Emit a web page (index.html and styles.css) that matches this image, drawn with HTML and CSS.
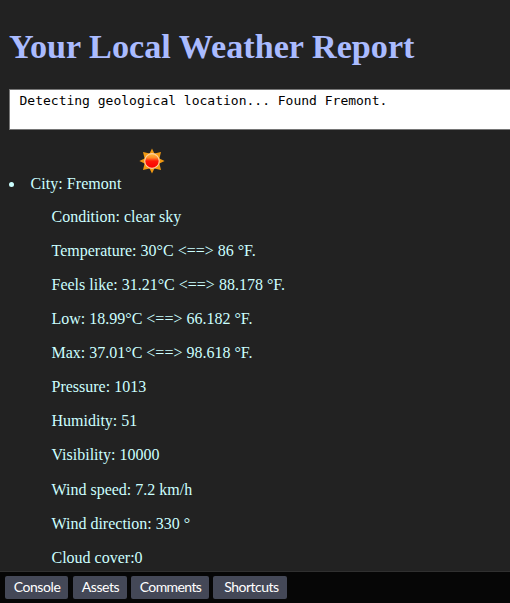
FILE: index.html
```
<!DOCTYPE html>
<html lang="en">
<head>
<meta charset="utf-8">
<title>Your Local Weather Report</title>
<link rel="stylesheet" href="styles.css">
</head>
<body>
<main class="page">
  <h1 class="title"><span>Your Local Weather Report</span></h1>
  <div class="status"><span>Detecting geological location... Found Fremont.</span></div>
  <svg class="sun" viewBox="0 0 26 26">
    <defs>
      <linearGradient id="core" x1="0" y1="0" x2="0" y2="1">
        <stop offset="0" stop-color="#ffc23c"/>
        <stop offset=".28" stop-color="#ff8a28"/>
        <stop offset=".5" stop-color="#ff1a08"/>
        <stop offset="1" stop-color="#fa0000"/>
      </linearGradient>
    </defs>
    <path fill="#f29a12" d="M13 .4 15.4 5.6 22 4 20.4 10.6 25.6 13 20.4 15.4 22 22 15.4 20.4 13 25.6 10.6 20.4 4 22 5.6 15.4 .4 13 5.6 10.6 4 4 10.6 5.6Z"/>
    <circle cx="13" cy="13" r="7.3" fill="url(#core)" stroke="#ffcf9c" stroke-width="1.2"/>
  </svg>
  <div class="city"><i class="bullet"></i><span>City: Fremont</span></div>
  <div class="details">
    <p><span>Condition: clear sky</span></p>
    <p><span>Temperature: 30°C &lt;==&gt; 86 °F.</span></p>
    <p><span>Feels like: 31.21°C &lt;==&gt; 88.178 °F.</span></p>
    <p><span>Low: 18.99°C &lt;==&gt; 66.182 °F.</span></p>
    <p><span>Max: 37.01°C &lt;==&gt; 98.618 °F.</span></p>
    <p><span>Pressure: 1013</span></p>
    <p><span>Humidity: 51</span></p>
    <p><span>Visibility: 10000</span></p>
    <p><span>Wind speed: 7.2 km/h</span></p>
    <p><span>Wind direction: 330 °</span></p>
    <p><span>Cloud cover:0</span></p>
  </div>
</main>
<footer class="toolbar">
  <button class="console">Console</button>
  <button class="assets">Assets</button>
  <button class="comments">Comments</button>
  <button class="shortcuts">Shortcuts</button>
</footer>
</body>
</html>
```
FILE: styles.css
```
* { box-sizing: border-box; }
body {
  margin: 0;
  height: 603px;
  display: flex;
  flex-direction: column;
  overflow: hidden;
  background: #222;
  color: #cff;
  font: 16px/18px "Liberation Serif", serif;
}
.page { flex: 1; min-height: 0; overflow: hidden; padding-left: 9px; white-space: nowrap; }
.title { margin: 26px 0 22px; font-size: 34.2px; line-height: 41px; color: #aabbff; }
.title span { padding-top: 1px; }
.status {
  height: 41px;
  padding: 3px 9.5px;
  border: 1px solid #767676;
  border-right: 0;
  background: #fff;
  color: #000;
  font: 13px/16px "DejaVu Sans Mono", monospace;
}
.sun { display: block; width: 26px; height: 26px; margin: 18px 0 0 130px; }
.city { display: flex; align-items: center; height: 18px; margin-top: 1px; letter-spacing: .05px; }
.bullet { width: 5px; height: 5px; margin-right: 16.5px; border-radius: 50%; background: #cff; }
.details { padding: 14.75px 0 0 42.5px; }
.details p { height: 34.1px; margin: 0; }
.toolbar {
  flex: none;
  display: flex;
  height: 32px;
  padding: 4px 5px;
  border-top: 1px solid #303030;
  background: #060606;
}
.toolbar button {
  height: 23px;
  padding: 0 0 1px 1px;
  border: 0;
  border-radius: 2px;
  background: #444857;
  color: #fff;
  font: 14px/22px Lato, sans-serif;
  letter-spacing: -.42px;
}
.toolbar .console { width: 63px; margin-right: 5px; }
.toolbar .assets { width: 54px; margin-right: 4px; letter-spacing: -.45px; }
.toolbar .comments { width: 78px; margin-right: 4px; letter-spacing: -.6px; }
.toolbar .shortcuts { width: 74px; padding-left: 3px; letter-spacing: -.5px; }
```
